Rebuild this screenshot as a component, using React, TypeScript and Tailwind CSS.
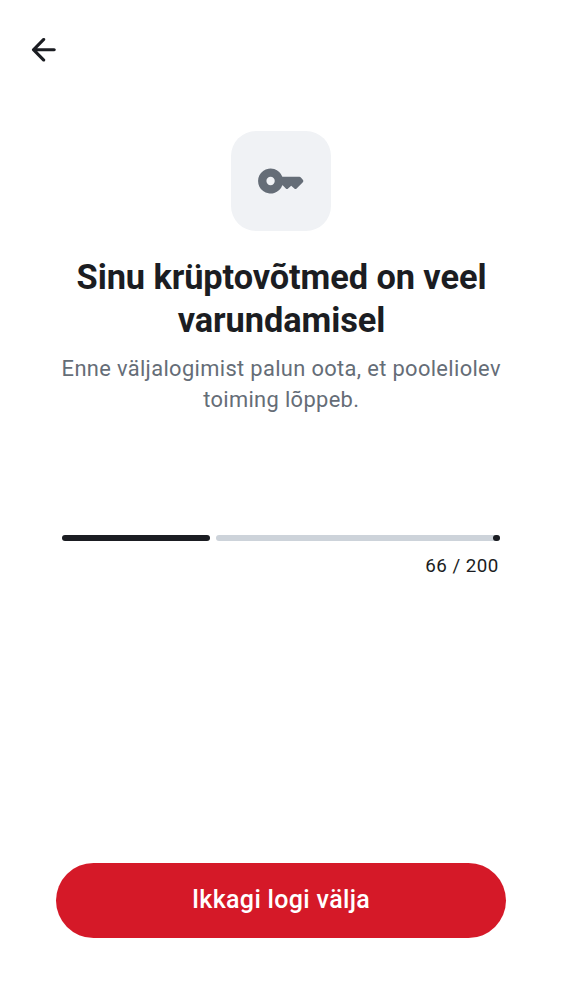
export default function App() {
  return (
    <main className="flex h-[1000px] w-[562px] flex-col bg-white font-['Roboto',sans-serif] text-[#1b1d22]">
      <header className="flex pl-[25px] pt-[31px]">
        <button aria-label="Tagasi" className="size-[37.5px]">
          <svg viewBox="0.4 0 24 24" className="size-full" fill="currentColor">
            <path d="m8.2 13 4.9 4.9a.96.96 0 0 1 .29.7 1 1 0 0 1-.31.7 1 1 0 0 1-.7.29.93.93 0 0 1-.7-.29l-6.6-6.6A.92.92 0 0 1 4.8 12q0-.2.06-.37a.9.9 0 0 1 .22-.33l6.6-6.6a.95.95 0 0 1 .69-.28q.41 0 .71.27.3.31.3.72t-.3.71L8.2 11h10.9q.42 0 .71.29.29.28.29.71t-.29.71a.96.96 0 0 1-.71.29z" />
          </svg>
        </button>
      </header>
      <section className="mt-[62.5px] flex flex-col items-center text-center">
        <div className="flex size-[100px] items-center justify-center rounded-[25px] bg-[#f0f2f5] text-[#656d77]">
          <svg viewBox="0 0 24 24" className="size-[50px]" fill="currentColor">
            <path fillRule="evenodd" d="M12.65 10h8.175a1 1 0 0 1 .7.3l.85 1a1 1 0 0 1 0 1.4L19.5 15.575a.8.8 0 0 1-1.1.025L16.9 14.25l-1.5 1.35a.8.8 0 0 1-1.1 0L12.8 14h-.15A6 6 0 1 1 12.65 10M7 14q.825 0 1.412-.588Q9 12.826 9 12t-.588-1.412A1.93 1.93 0 0 0 7 10q-.825 0-1.412.588A1.93 1.93 0 0 0 5 12q0 .825.588 1.412Q6.175 14 7 14" />
          </svg>
        </div>
        <h1 className="mt-[25px] pl-[1px] text-[34.375px] font-bold leading-[42.5px] tracking-[-0.09px]">Sinu krüptovõtmed on veel<br />varundamisel</h1>
        <p className="mt-[12px] pl-[0.5px] text-[21.875px] leading-[31.25px] tracking-[0.35px] text-[#656d77]">Enne väljalogimist palun oota, et pooleliolev<br />toiming lõppeb.</p>
      </section>
      <section className="mx-[62.3px] mt-[119px]">
        <div className="flex h-[6.25px] gap-[6.25px]">
          <div className="w-[147.7px] rounded-full bg-[#1b1d22]" />
          <div className="flex flex-1 justify-end rounded-full bg-[#cdd3da]"><div className="size-[6.25px] rounded-full bg-[#1b1d22]" /></div>
        </div>
        <p className="mt-[12.5px] pr-[0.8px] text-right text-[18.75px] leading-[26px] tracking-[0.5px]">66 / 200</p>
      </section>
      <button className="mx-[56px] mb-[62.5px] mt-auto h-[75px] rounded-full bg-[#d51928] text-[25px] font-medium tracking-[0.33px] text-white">Ikkagi logi välja</button>
    </main>
  );
}
